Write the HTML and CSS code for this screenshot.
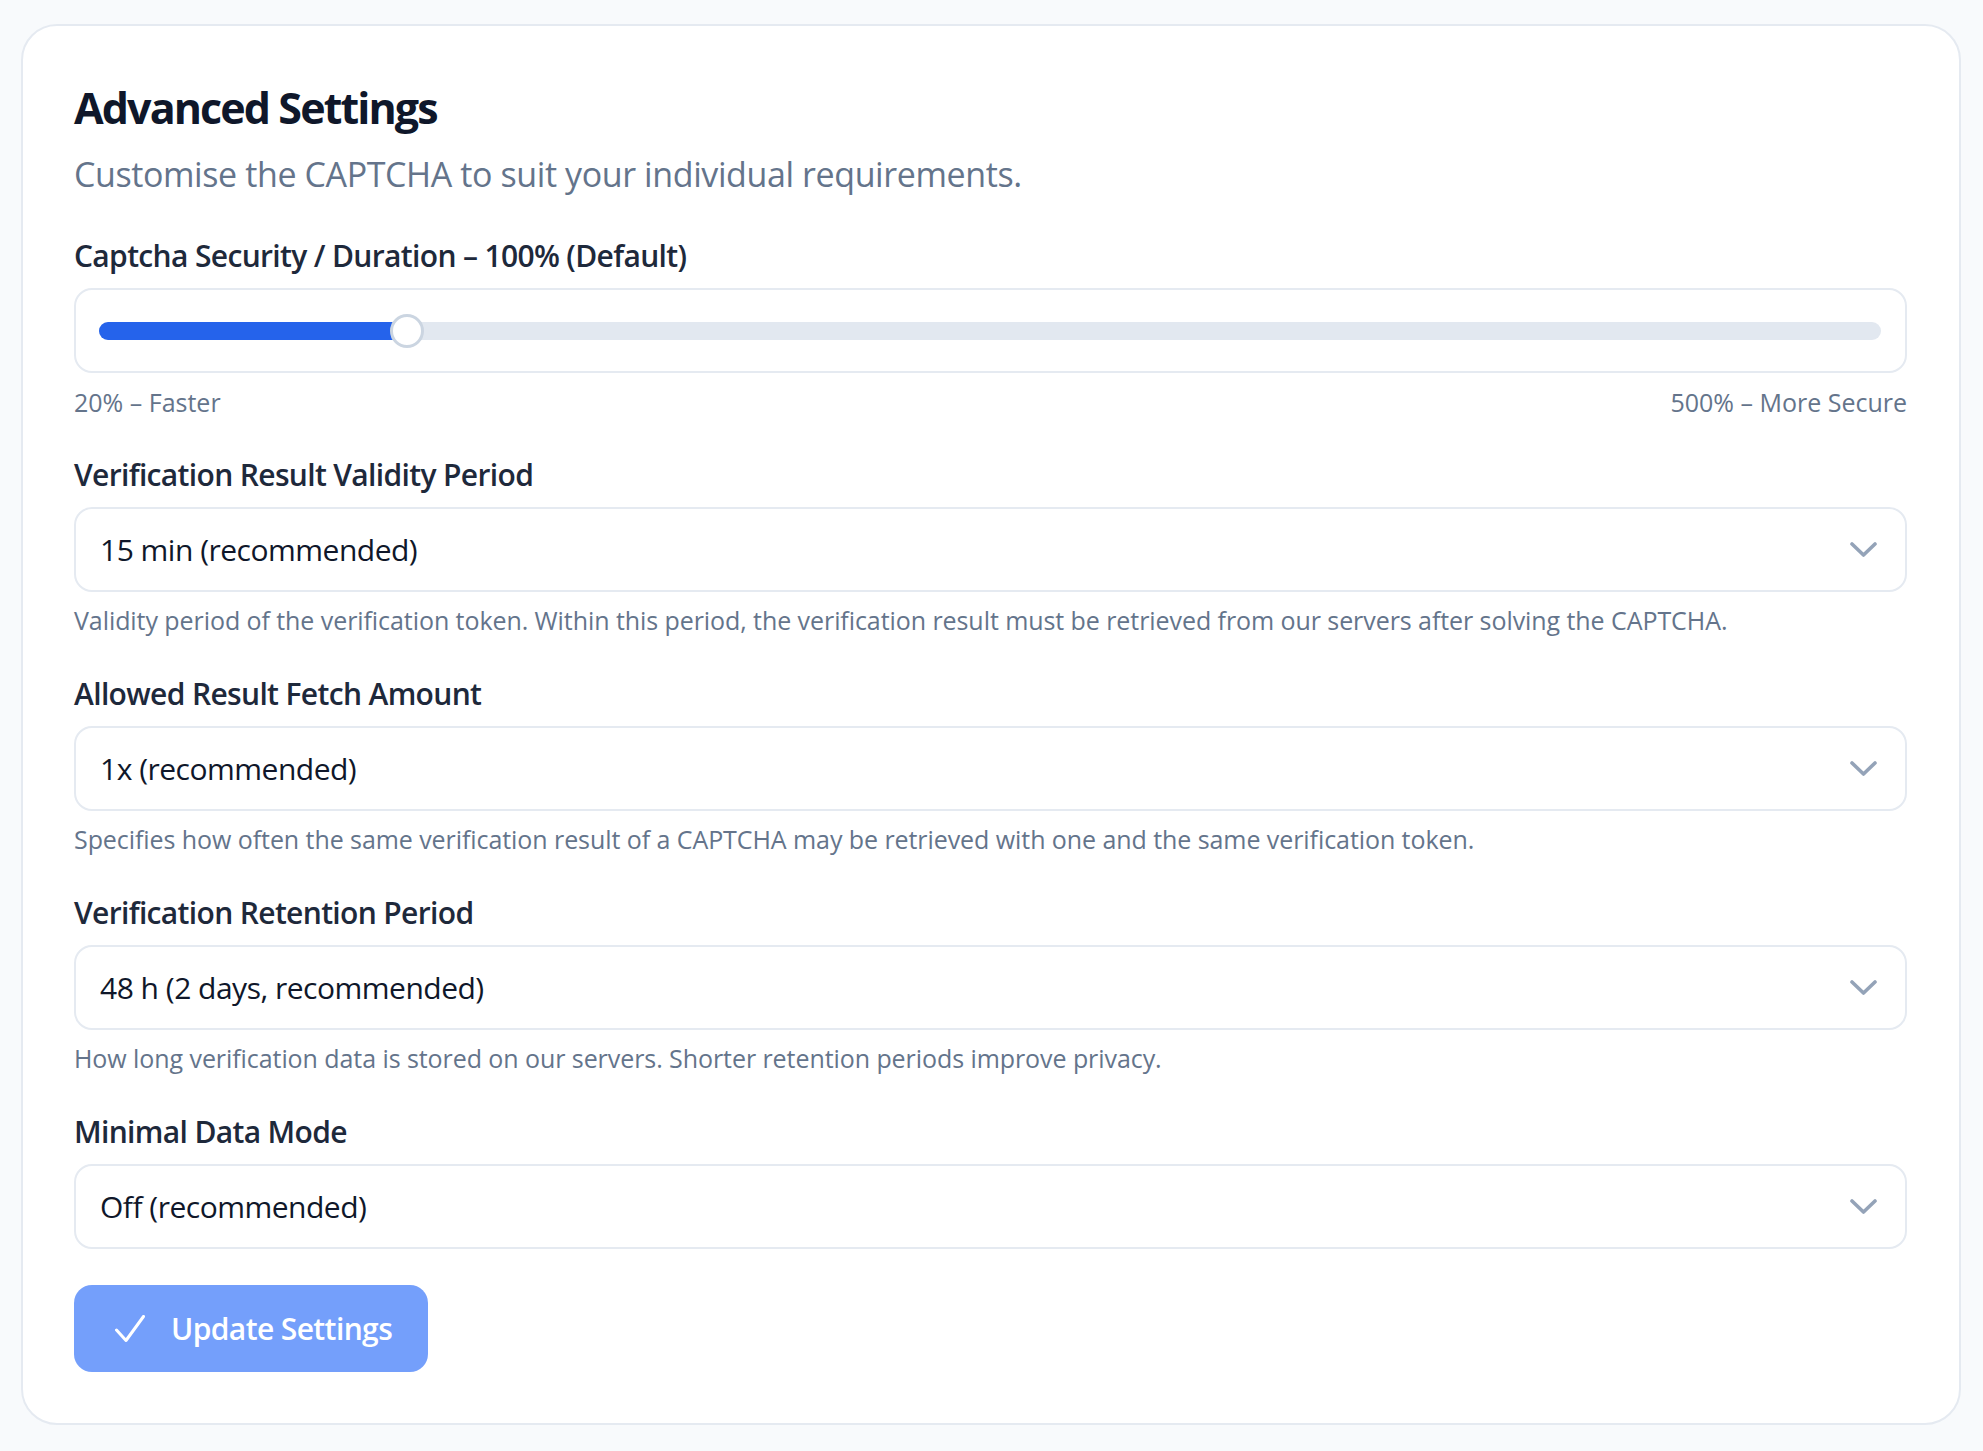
FILE: index.html
```html
<!DOCTYPE html>
<html lang="en">
<head>
    <meta charset="UTF-8">
    <meta name="viewport" content="width=device-width, initial-scale=1.0">
    <title>Advanced Settings</title>
    <link rel="stylesheet" href="styles.css">
</head>
<body>
    <!-- Settings card -->
    <div class="card">
        <h1 class="title">Advanced Settings</h1>
        <p class="subtitle">Customise the CAPTCHA to suit your individual requirements.</p>

        <!-- Security slider -->
        <div class="field field-slider">
            <div class="label">Captcha Security / Duration – 100% (Default)</div>
            <div class="slider-box">
                <div class="track" style="--value: 0.1667">
                    <div class="fill"></div>
                    <div class="thumb"></div>
                </div>
            </div>
            <div class="range-labels">
                <span>20% – Faster</span>
                <span>500% – More Secure</span>
            </div>
        </div>

        <div class="field">
            <div class="label">Verification Result Validity Period</div>
            <div class="select">
                <span>15 min (recommended)</span>
                <svg class="chevron" width="27" height="15" viewBox="0 0 27 15"><polyline points="2,2 13.5,13 25,2"/></svg>
            </div>
            <div class="help">Validity period of the verification token. Within this period, the verification result must be retrieved from our servers after solving the CAPTCHA.</div>
        </div>

        <div class="field">
            <div class="label">Allowed Result Fetch Amount</div>
            <div class="select">
                <span>1x (recommended)</span>
                <svg class="chevron" width="27" height="15" viewBox="0 0 27 15"><polyline points="2,2 13.5,13 25,2"/></svg>
            </div>
            <div class="help">Specifies how often the same verification result of a CAPTCHA may be retrieved with one and the same verification token.</div>
        </div>

        <div class="field">
            <div class="label">Verification Retention Period</div>
            <div class="select">
                <span>48 h (2 days, recommended)</span>
                <svg class="chevron" width="27" height="15" viewBox="0 0 27 15"><polyline points="2,2 13.5,13 25,2"/></svg>
            </div>
            <div class="help">How long verification data is stored on our servers. Shorter retention periods improve privacy.</div>
        </div>

        <div class="field">
            <div class="label">Minimal Data Mode</div>
            <div class="select">
                <span>Off (recommended)</span>
                <svg class="chevron" width="27" height="15" viewBox="0 0 27 15"><polyline points="2,2 13.5,13 25,2"/></svg>
            </div>
        </div>

        <button class="save-btn">
            <svg class="check" width="30" height="27" viewBox="0 0 30 27"><polyline points="1.5,15 11,25.5 28.5,1.5"/></svg>
            <span>Update Settings</span>
        </button>
    </div>
</body>
</html>
```

FILE: styles.css
```css
/* General */
body {
    margin: 0;
    padding: 24px 22px 26px 21px;
    background-color: #f8fafc;
    font-family: "Open Sans", sans-serif;
}

/* Card */
.card {
    background-color: #ffffff;
    border: 2px solid #e5eaf1;
    border-radius: 36px;
    padding: 55px 52px 51px 51px;
}

.title {
    margin: 0;
    font-size: 43px;
    line-height: 54px;
    font-weight: 700;
    letter-spacing: -1.9px;
    color: #0f172a;
}

.subtitle {
    margin: 15px 0 0;
    font-size: 34px;
    line-height: 48px;
    letter-spacing: -0.4px;
    color: #64748b;
}

/* Fields */
.field {
    margin-top: 35px;
}

.field-slider {
    margin-top: 37px;
    margin-bottom: -1px;
}

.label {
    font-size: 30px;
    line-height: 42px;
    font-weight: 600;
    letter-spacing: -0.65px;
    color: #1e293b;
}

.help {
    margin-top: 10px;
    font-size: 25px;
    line-height: 36px;
    letter-spacing: -0.07px;
    color: #64748b;
}

/* Slider */
.slider-box {
    margin-top: 11px;
    height: 85px;
    box-sizing: border-box;
    border: 2px solid #e5eaf1;
    border-radius: 18px;
    padding: 0 24px 0 23px;
    display: flex;
    align-items: center;
}

.track {
    position: relative;
    flex: 1;
    height: 18px;
    border-radius: 9px;
    background-color: #e2e8f0;
}

.fill {
    height: 100%;
    width: calc(17px + (100% - 34px) * var(--value));
    border-radius: 9px;
    background-color: #2563eb;
}

.thumb {
    position: absolute;
    top: 50%;
    left: calc((100% - 34px) * var(--value));
    width: 28px;
    height: 28px;
    margin-top: -17px;
    border: 3px solid #cbd5e1;
    border-radius: 50%;
    background-color: #ffffff;
}

.range-labels {
    margin-top: 11px;
    display: flex;
    justify-content: space-between;
    font-size: 25px;
    line-height: 36px;
    color: #64748b;
}

/* Select boxes */
.select {
    margin-top: 11px;
    height: 85px;
    box-sizing: border-box;
    border: 2px solid #e5eaf1;
    border-radius: 18px;
    padding: 0 28px 0 24px;
    display: flex;
    align-items: center;
    justify-content: space-between;
    font-size: 30px;
    line-height: 42px;
    letter-spacing: -0.5px;
    color: #0f172a;
}

.chevron polyline {
    fill: none;
    stroke: #94a3b8;
    stroke-width: 3.6;
    stroke-linecap: round;
    stroke-linejoin: round;
}

/* Button */
.save-btn {
    margin-top: 36px;
    height: 87px;
    padding: 0 36px 0 41px;
    display: flex;
    align-items: center;
    gap: 26px;
    border: none;
    border-radius: 18px;
    background-color: #749ffb;
    color: #ffffff;
    font-family: "Open Sans", sans-serif;
    font-size: 30px;
    line-height: 42px;
    font-weight: 600;
    letter-spacing: -0.6px;
    cursor: pointer;
}

.check polyline {
    fill: none;
    stroke: #ffffff;
    stroke-width: 3;
    stroke-linecap: round;
    stroke-linejoin: round;
}
```
